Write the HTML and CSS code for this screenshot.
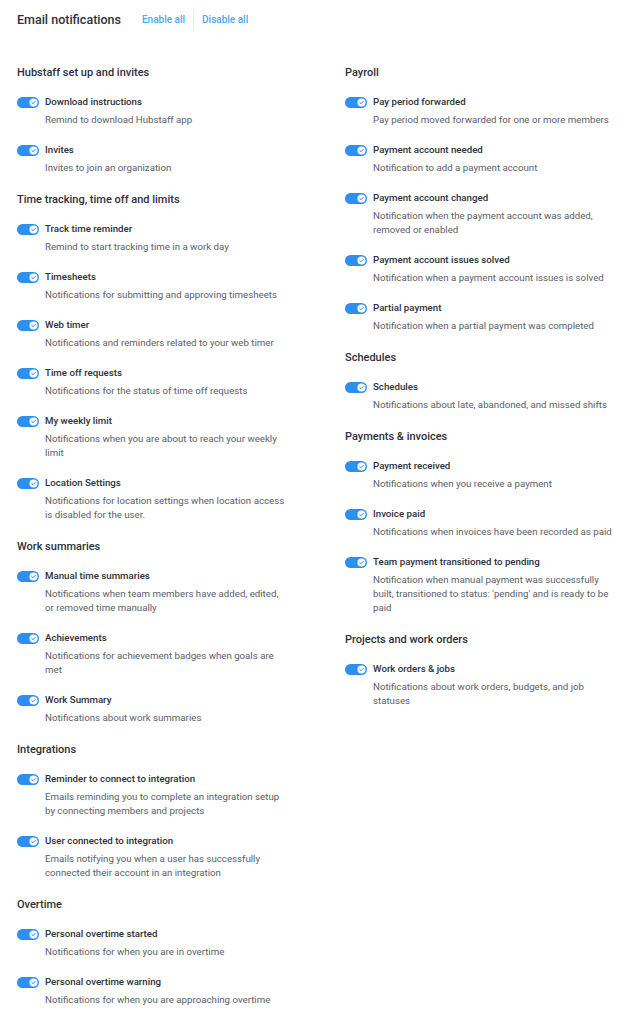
FILE: index.html
```html
<!DOCTYPE html>
<html lang="en">
	<head>
		<meta charset="utf-8" />
		<title>Email notifications</title>
		<meta name="viewport" content="width=device-width, initial-scale=1" />
		<link rel="stylesheet" href="styles.css">
	</head>
	<body>
		<div class="page">
			<div class="header">
				<h1 class="title">Email notifications</h1>
				<div class="actions">
					<a class="action" href="#">Enable all</a>
					<a class="action" href="#">Disable all</a>
				</div>
			</div>

			<div class="columns">
				<div class="column">
					<div class="group">
						<h2 class="group-title">Hubstaff set up and invites</h2>
						<div class="setting">
							<span class="toggle"><svg class="knob" viewBox="0 0 10 10"><circle cx="5" cy="5" r="4.5" fill="#fff"/><path d="M3 5.1 L4.4 6.4 L7 3.7" fill="none" stroke="#2f8ff0" stroke-width="1.1" stroke-linecap="round" stroke-linejoin="round"/></svg></span>
							<div class="setting-body">
								<div class="setting-name">Download instructions</div>
								<div class="setting-desc">Remind to download Hubstaff app</div>
							</div>
						</div>
						<div class="setting">
							<span class="toggle"><svg class="knob" viewBox="0 0 10 10"><circle cx="5" cy="5" r="4.5" fill="#fff"/><path d="M3 5.1 L4.4 6.4 L7 3.7" fill="none" stroke="#2f8ff0" stroke-width="1.1" stroke-linecap="round" stroke-linejoin="round"/></svg></span>
							<div class="setting-body">
								<div class="setting-name">Invites</div>
								<div class="setting-desc">Invites to join an organization</div>
							</div>
						</div>
					</div>

					<div class="group">
						<h2 class="group-title">Time tracking, time off and limits</h2>
						<div class="setting">
							<span class="toggle"><svg class="knob" viewBox="0 0 10 10"><circle cx="5" cy="5" r="4.5" fill="#fff"/><path d="M3 5.1 L4.4 6.4 L7 3.7" fill="none" stroke="#2f8ff0" stroke-width="1.1" stroke-linecap="round" stroke-linejoin="round"/></svg></span>
							<div class="setting-body">
								<div class="setting-name">Track time reminder</div>
								<div class="setting-desc">Remind to start tracking time in a work day</div>
							</div>
						</div>
						<div class="setting">
							<span class="toggle"><svg class="knob" viewBox="0 0 10 10"><circle cx="5" cy="5" r="4.5" fill="#fff"/><path d="M3 5.1 L4.4 6.4 L7 3.7" fill="none" stroke="#2f8ff0" stroke-width="1.1" stroke-linecap="round" stroke-linejoin="round"/></svg></span>
							<div class="setting-body">
								<div class="setting-name">Timesheets</div>
								<div class="setting-desc">Notifications for submitting and approving timesheets</div>
							</div>
						</div>
						<div class="setting">
							<span class="toggle"><svg class="knob" viewBox="0 0 10 10"><circle cx="5" cy="5" r="4.5" fill="#fff"/><path d="M3 5.1 L4.4 6.4 L7 3.7" fill="none" stroke="#2f8ff0" stroke-width="1.1" stroke-linecap="round" stroke-linejoin="round"/></svg></span>
							<div class="setting-body">
								<div class="setting-name">Web timer</div>
								<div class="setting-desc">Notifications and reminders related to your web timer</div>
							</div>
						</div>
						<div class="setting">
							<span class="toggle"><svg class="knob" viewBox="0 0 10 10"><circle cx="5" cy="5" r="4.5" fill="#fff"/><path d="M3 5.1 L4.4 6.4 L7 3.7" fill="none" stroke="#2f8ff0" stroke-width="1.1" stroke-linecap="round" stroke-linejoin="round"/></svg></span>
							<div class="setting-body">
								<div class="setting-name">Time off requests</div>
								<div class="setting-desc">Notifications for the status of time off requests</div>
							</div>
						</div>
						<div class="setting">
							<span class="toggle"><svg class="knob" viewBox="0 0 10 10"><circle cx="5" cy="5" r="4.5" fill="#fff"/><path d="M3 5.1 L4.4 6.4 L7 3.7" fill="none" stroke="#2f8ff0" stroke-width="1.1" stroke-linecap="round" stroke-linejoin="round"/></svg></span>
							<div class="setting-body">
								<div class="setting-name">My weekly limit</div>
								<div class="setting-desc">Notifications when you are about to reach your weekly limit</div>
							</div>
						</div>
						<div class="setting">
							<span class="toggle"><svg class="knob" viewBox="0 0 10 10"><circle cx="5" cy="5" r="4.5" fill="#fff"/><path d="M3 5.1 L4.4 6.4 L7 3.7" fill="none" stroke="#2f8ff0" stroke-width="1.1" stroke-linecap="round" stroke-linejoin="round"/></svg></span>
							<div class="setting-body">
								<div class="setting-name">Location Settings</div>
								<div class="setting-desc">Notifications for location settings when location access is disabled for the user.</div>
							</div>
						</div>
					</div>

					<div class="group">
						<h2 class="group-title">Work summaries</h2>
						<div class="setting">
							<span class="toggle"><svg class="knob" viewBox="0 0 10 10"><circle cx="5" cy="5" r="4.5" fill="#fff"/><path d="M3 5.1 L4.4 6.4 L7 3.7" fill="none" stroke="#2f8ff0" stroke-width="1.1" stroke-linecap="round" stroke-linejoin="round"/></svg></span>
							<div class="setting-body">
								<div class="setting-name">Manual time summaries</div>
								<div class="setting-desc">Notifications when team members have added, edited, or removed time manually</div>
							</div>
						</div>
						<div class="setting">
							<span class="toggle"><svg class="knob" viewBox="0 0 10 10"><circle cx="5" cy="5" r="4.5" fill="#fff"/><path d="M3 5.1 L4.4 6.4 L7 3.7" fill="none" stroke="#2f8ff0" stroke-width="1.1" stroke-linecap="round" stroke-linejoin="round"/></svg></span>
							<div class="setting-body">
								<div class="setting-name">Achievements</div>
								<div class="setting-desc">Notifications for achievement badges when goals are met</div>
							</div>
						</div>
						<div class="setting">
							<span class="toggle"><svg class="knob" viewBox="0 0 10 10"><circle cx="5" cy="5" r="4.5" fill="#fff"/><path d="M3 5.1 L4.4 6.4 L7 3.7" fill="none" stroke="#2f8ff0" stroke-width="1.1" stroke-linecap="round" stroke-linejoin="round"/></svg></span>
							<div class="setting-body">
								<div class="setting-name">Work Summary</div>
								<div class="setting-desc">Notifications about work summaries</div>
							</div>
						</div>
					</div>

					<div class="group">
						<h2 class="group-title">Integrations</h2>
						<div class="setting">
							<span class="toggle"><svg class="knob" viewBox="0 0 10 10"><circle cx="5" cy="5" r="4.5" fill="#fff"/><path d="M3 5.1 L4.4 6.4 L7 3.7" fill="none" stroke="#2f8ff0" stroke-width="1.1" stroke-linecap="round" stroke-linejoin="round"/></svg></span>
							<div class="setting-body">
								<div class="setting-name">Reminder to connect to integration</div>
								<div class="setting-desc">Emails reminding you to complete an integration setup by connecting members and projects</div>
							</div>
						</div>
						<div class="setting">
							<span class="toggle"><svg class="knob" viewBox="0 0 10 10"><circle cx="5" cy="5" r="4.5" fill="#fff"/><path d="M3 5.1 L4.4 6.4 L7 3.7" fill="none" stroke="#2f8ff0" stroke-width="1.1" stroke-linecap="round" stroke-linejoin="round"/></svg></span>
							<div class="setting-body">
								<div class="setting-name">User connected to integration</div>
								<div class="setting-desc">Emails notifying you when a user has successfully connected their account in an integration</div>
							</div>
						</div>
					</div>

					<div class="group">
						<h2 class="group-title">Overtime</h2>
						<div class="setting">
							<span class="toggle"><svg class="knob" viewBox="0 0 10 10"><circle cx="5" cy="5" r="4.5" fill="#fff"/><path d="M3 5.1 L4.4 6.4 L7 3.7" fill="none" stroke="#2f8ff0" stroke-width="1.1" stroke-linecap="round" stroke-linejoin="round"/></svg></span>
							<div class="setting-body">
								<div class="setting-name">Personal overtime started</div>
								<div class="setting-desc">Notifications for when you are in overtime</div>
							</div>
						</div>
						<div class="setting">
							<span class="toggle"><svg class="knob" viewBox="0 0 10 10"><circle cx="5" cy="5" r="4.5" fill="#fff"/><path d="M3 5.1 L4.4 6.4 L7 3.7" fill="none" stroke="#2f8ff0" stroke-width="1.1" stroke-linecap="round" stroke-linejoin="round"/></svg></span>
							<div class="setting-body">
								<div class="setting-name">Personal overtime warning</div>
								<div class="setting-desc">Notifications for when you are approaching overtime</div>
							</div>
						</div>
					</div>
				</div>

				<div class="column">
					<div class="group">
						<h2 class="group-title">Payroll</h2>
						<div class="setting">
							<span class="toggle"><svg class="knob" viewBox="0 0 10 10"><circle cx="5" cy="5" r="4.5" fill="#fff"/><path d="M3 5.1 L4.4 6.4 L7 3.7" fill="none" stroke="#2f8ff0" stroke-width="1.1" stroke-linecap="round" stroke-linejoin="round"/></svg></span>
							<div class="setting-body">
								<div class="setting-name">Pay period forwarded</div>
								<div class="setting-desc">Pay period moved forwarded for one or more members</div>
							</div>
						</div>
						<div class="setting">
							<span class="toggle"><svg class="knob" viewBox="0 0 10 10"><circle cx="5" cy="5" r="4.5" fill="#fff"/><path d="M3 5.1 L4.4 6.4 L7 3.7" fill="none" stroke="#2f8ff0" stroke-width="1.1" stroke-linecap="round" stroke-linejoin="round"/></svg></span>
							<div class="setting-body">
								<div class="setting-name">Payment account needed</div>
								<div class="setting-desc">Notification to add a payment account</div>
							</div>
						</div>
						<div class="setting">
							<span class="toggle"><svg class="knob" viewBox="0 0 10 10"><circle cx="5" cy="5" r="4.5" fill="#fff"/><path d="M3 5.1 L4.4 6.4 L7 3.7" fill="none" stroke="#2f8ff0" stroke-width="1.1" stroke-linecap="round" stroke-linejoin="round"/></svg></span>
							<div class="setting-body">
								<div class="setting-name">Payment account changed</div>
								<div class="setting-desc">Notification when the payment account was added, removed or enabled</div>
							</div>
						</div>
						<div class="setting">
							<span class="toggle"><svg class="knob" viewBox="0 0 10 10"><circle cx="5" cy="5" r="4.5" fill="#fff"/><path d="M3 5.1 L4.4 6.4 L7 3.7" fill="none" stroke="#2f8ff0" stroke-width="1.1" stroke-linecap="round" stroke-linejoin="round"/></svg></span>
							<div class="setting-body">
								<div class="setting-name">Payment account issues solved</div>
								<div class="setting-desc">Notification when a payment account issues is solved</div>
							</div>
						</div>
						<div class="setting">
							<span class="toggle"><svg class="knob" viewBox="0 0 10 10"><circle cx="5" cy="5" r="4.5" fill="#fff"/><path d="M3 5.1 L4.4 6.4 L7 3.7" fill="none" stroke="#2f8ff0" stroke-width="1.1" stroke-linecap="round" stroke-linejoin="round"/></svg></span>
							<div class="setting-body">
								<div class="setting-name">Partial payment</div>
								<div class="setting-desc">Notification when a partial payment was completed</div>
							</div>
						</div>
					</div>

					<div class="group">
						<h2 class="group-title">Schedules</h2>
						<div class="setting">
							<span class="toggle"><svg class="knob" viewBox="0 0 10 10"><circle cx="5" cy="5" r="4.5" fill="#fff"/><path d="M3 5.1 L4.4 6.4 L7 3.7" fill="none" stroke="#2f8ff0" stroke-width="1.1" stroke-linecap="round" stroke-linejoin="round"/></svg></span>
							<div class="setting-body">
								<div class="setting-name">Schedules</div>
								<div class="setting-desc">Notifications about late, abandoned, and missed shifts</div>
							</div>
						</div>
					</div>

					<div class="group">
						<h2 class="group-title">Payments &amp; invoices</h2>
						<div class="setting">
							<span class="toggle"><svg class="knob" viewBox="0 0 10 10"><circle cx="5" cy="5" r="4.5" fill="#fff"/><path d="M3 5.1 L4.4 6.4 L7 3.7" fill="none" stroke="#2f8ff0" stroke-width="1.1" stroke-linecap="round" stroke-linejoin="round"/></svg></span>
							<div class="setting-body">
								<div class="setting-name">Payment received</div>
								<div class="setting-desc">Notifications when you receive a payment</div>
							</div>
						</div>
						<div class="setting">
							<span class="toggle"><svg class="knob" viewBox="0 0 10 10"><circle cx="5" cy="5" r="4.5" fill="#fff"/><path d="M3 5.1 L4.4 6.4 L7 3.7" fill="none" stroke="#2f8ff0" stroke-width="1.1" stroke-linecap="round" stroke-linejoin="round"/></svg></span>
							<div class="setting-body">
								<div class="setting-name">Invoice paid</div>
								<div class="setting-desc">Notifications when invoices have been recorded as paid</div>
							</div>
						</div>
						<div class="setting">
							<span class="toggle"><svg class="knob" viewBox="0 0 10 10"><circle cx="5" cy="5" r="4.5" fill="#fff"/><path d="M3 5.1 L4.4 6.4 L7 3.7" fill="none" stroke="#2f8ff0" stroke-width="1.1" stroke-linecap="round" stroke-linejoin="round"/></svg></span>
							<div class="setting-body">
								<div class="setting-name">Team payment transitioned to pending</div>
								<div class="setting-desc">Notification when manual payment was successfully built, transitioned to status: 'pending' and is ready to be paid</div>
							</div>
						</div>
					</div>

					<div class="group">
						<h2 class="group-title">Projects and work orders</h2>
						<div class="setting">
							<span class="toggle"><svg class="knob" viewBox="0 0 10 10"><circle cx="5" cy="5" r="4.5" fill="#fff"/><path d="M3 5.1 L4.4 6.4 L7 3.7" fill="none" stroke="#2f8ff0" stroke-width="1.1" stroke-linecap="round" stroke-linejoin="round"/></svg></span>
							<div class="setting-body">
								<div class="setting-name">Work orders &amp; jobs</div>
								<div class="setting-desc">Notifications about work orders, budgets, and job statuses</div>
							</div>
						</div>
					</div>
				</div>
			</div>
		</div>
	</body>
</html>
```

FILE: styles.css
```css
* { box-sizing: border-box; }

html {
	font: 9.7px/14px Roboto, "Liberation Sans", sans-serif;
	color: #2c3038;
}

body {
	margin: 0;
	background: #fff;
}

.page {
	padding: 10px 17px 0 17px;
}

/* top bar with bulk actions */
.header {
	display: flex;
	align-items: center;
	height: 20px;
}

.title {
	margin: 0 13px 0 0;
	font-size: 12.5px;
	line-height: 20px;
	font-weight: 500;
	color: #2c3038;
}

.actions {
	display: flex;
	align-items: center;
}

.action {
	padding: 0 8px;
	font-size: 10px;
	line-height: 20px;
	font-weight: 500;
	color: #4aa8f2;
	text-decoration: none;
}

.action + .action {
	border-left: 1px solid #e6e8eb;
}

.columns {
	display: grid;
	grid-template-columns: 272px 272px;
	column-gap: 56px;
	margin-top: 34px;
}

.group-title {
	margin: 0 0 13px 0;
	font-size: 11px;
	line-height: 18px;
	font-weight: 500;
	color: #2c3038;
}

.setting {
	display: flex;
	align-items: flex-start;
	gap: 6px;
	margin-bottom: 16px;
}

/* switch, always in the "on" state here */
.toggle {
	flex: none;
	display: flex;
	align-items: center;
	justify-content: flex-end;
	width: 22px;
	height: 11px;
	margin-top: 1.5px;
	padding: 0 1px;
	border-radius: 6px;
	background: #2f8ff0;
}

.knob {
	display: block;
	width: 9px;
	height: 9px;
}

.setting-name {
	font-weight: 500;
	color: #2c3038;
}

.setting-desc {
	margin-top: 4px;
	color: #5a6068;
}
```
